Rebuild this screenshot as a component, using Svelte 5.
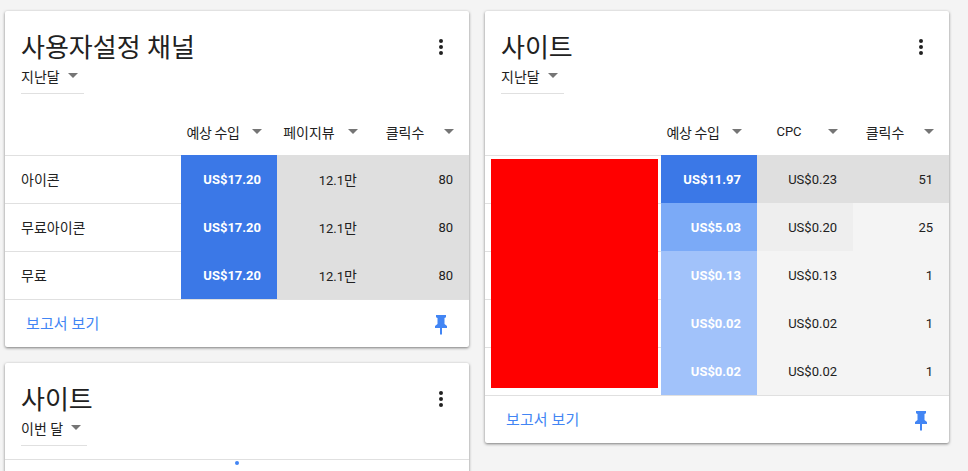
<script>
  const pin = "M15 3H5v2.2l1.5.8v6L4 14v2h5v6.5h2V16h5v-2l-2.5-2V6l1.5-.8z";
  const dots = "M12 8a2 2 0 1 0 0-4 2 2 0 0 0 0 4zm0 2a2 2 0 1 0 0 4 2 2 0 0 0 0-4zm0 6a2 2 0 1 0 0 4 2 2 0 0 0 0-4z";
  const channels = {
    title: "사용자설정 채널", period: "지난달",
    cols: ["예상 수입", "페이지뷰", "클릭수"],
    rows: [
      { label: "아이콘", cells: [["US$17.20", "b1"], ["12.1", "g1", "만"], ["80", "g1"]] },
      { label: "무료아이콘", cells: [["US$17.20", "b1"], ["12.1", "g1", "만"], ["80", "g1"]] },
      { label: "무료", cells: [["US$17.20", "b1"], ["12.1", "g1", "만"], ["80", "g1"]] }
    ]
  };
  const sites = {
    title: "사이트", period: "지난달", ad: true,
    cols: ["예상 수입", "CPC", "클릭수"],
    rows: [
      { label: "", cells: [["US$11.97", "b1"], ["US$0.23", "g1"], ["51", "g1"]] },
      { label: "", cells: [["US$5.03", "b2"], ["US$0.20", "g2"], ["25", "g3"]] },
      { label: "", cells: [["US$0.13", "b3"], ["US$0.13", "g3"], ["1", "g3"]] },
      { label: "", cells: [["US$0.02", "b3"], ["US$0.02", "g3"], ["1", "g3"]] },
      { label: "", cells: [["US$0.02", "b3"], ["US$0.02", "g3"], ["1", "g3"]] }
    ]
  };
</script>

{#snippet head(title, period)}
  <div class="head">
    <div class="titles">
      <h2>{title}</h2>
      <div class="period"><span>{period}</span><i class="caret"></i></div>
    </div>
    <svg class="dots" viewBox="0 0 24 24" width="24" height="24"><path d={dots} /></svg>
  </div>
{/snippet}

{#snippet card(c)}
  <section class="card">
    {@render head(c.title, c.period)}
    <div class="cols">
      <div></div>
      {#each c.cols as col}
        <div class="col"><span class:latin={col === "CPC"} class:tight={col.includes(" ")}>{col}</span><i class="caret"></i></div>
      {/each}
    </div>
    <div class="body">
      {#if c.ad}<div class="ad"></div>{/if}
      {#each c.rows as row}
        <div class="row">
          <div class="label">{row.label}</div>
          {#each row.cells as cell, i}
            <div class="cell {cell[1]}" class:strong={i === 0}><span>{cell[0]}{#if cell[2]}<span class="unit">{cell[2]}</span>{/if}</span></div>
          {/each}
        </div>
      {/each}
    </div>
    <div class="foot">
      <span class="link">보고서 보기</span>
      <svg class="pin" viewBox="0 0 20 24" width="20" height="24"><path d={pin} /></svg>
    </div>
  </section>
{/snippet}

<main>
  <div class="column">
    {@render card(channels)}
    <section class="card stub">
      {@render head("사이트", "이번 달")}
      <div class="loading"><i></i></div>
    </section>
  </div>
  <div class="column">
    {@render card(sites)}
  </div>
</main>

<style>
  :global(body) {
    margin: 0;
    background: #f4f4f4;
    overflow: hidden;
  }
  main {
    display: flex;
    gap: 16px;
    height: 471px;
    box-sizing: border-box;
    padding: 11px 0 0 5px;
    overflow: hidden;
    font-family: Roboto, "Noto Sans CJK KR", sans-serif;
    font-size: 13px;
    color: #212121;
  }
  .column {
    display: flex;
    flex-direction: column;
    gap: 16px;
    width: 464px;
  }
  .card {
    flex: none;
    background: #fff;
    border-radius: 2px;
    box-shadow: 0 1px 3px rgba(0, 0, 0, 0.5);
  }
  .head {
    display: flex;
    justify-content: space-between;
    height: 97px;
    box-sizing: border-box;
    padding: 19px 16px 0 16px;
  }
  h2 {
    margin: 0;
    font-size: 26px;
    font-weight: 400;
    line-height: 36px;
  }
  .period {
    display: flex;
    align-items: center;
    gap: 8px;
    width: fit-content;
    height: 29px;
    box-sizing: border-box;
    margin-top: -1px;
    padding: 0 6px 7px 0;
    border-bottom: 1px solid #e0e0e0;
    font-size: 14px;
  }
  .caret {
    display: block;
    flex: none;
    width: 0;
    height: 0;
    border-left: 5px solid transparent;
    border-right: 5px solid transparent;
    border-top: 5px solid #757575;
  }
  .dots {
    margin-top: 5px;
    fill: #212121;
  }
  .cols {
    display: grid;
    grid-template-columns: 176px repeat(3, 96px);
    height: 47px;
  }
  .col {
    display: grid;
    grid-template-columns: 64px 24px;
    align-items: center;
    justify-items: center;
  }
  .col span {
    white-space: nowrap;
    font-size: 14px;
  }
  .col span.tight {
    letter-spacing: -0.4px;
  }
  .col span.latin {
    font-size: 13px;
  }
  .body {
    position: relative;
  }
  .row {
    display: grid;
    grid-template-columns: 176px repeat(3, 96px);
    height: 48px;
  }
  .label {
    display: flex;
    align-items: center;
    padding: 0 0 1px 16px;
    border-top: 1px solid #e0e0e0;
    font-size: 14px;
    box-sizing: border-box;
  }
  .cell {
    display: flex;
    align-items: center;
    justify-content: flex-end;
    padding-right: 16px;
  }
  .unit {
    font-size: 14px;
  }
  .strong {
    color: #fff;
    font-weight: 700;
  }
  .b1 { background: #3b78e7; }
  .b2 { background: #7baaf7; }
  .b3 { background: #a1c2fa; }
  .g1 { background: #dfdfdf; }
  .g2 { background: #eeeeee; }
  .g3 { background: #f4f4f4; }
  .ad {
    position: absolute;
    left: 6px;
    top: 4px;
    width: 167px;
    height: 229px;
    background: #f00;
  }
  .foot {
    display: flex;
    align-items: center;
    justify-content: space-between;
    height: 48px;
    box-sizing: border-box;
    padding: 0 18px 0 21px;
    border-top: 1px solid #e0e0e0;
  }
  .link {
    color: #4285f4;
    font-size: 15px;
    letter-spacing: 0.1px;
    padding-bottom: 2px;
  }
  .pin {
    fill: #4285f4;
  }
  .stub {
    height: 200px;
  }
  .loading {
    position: relative;
    border-top: 1px solid #e0e0e0;
    margin-top: -1px;
  }
  .loading i {
    position: absolute;
    left: 230px;
    top: 1px;
    width: 4px;
    height: 4px;
    border-radius: 50%;
    background: #4285f4;
  }
</style>
